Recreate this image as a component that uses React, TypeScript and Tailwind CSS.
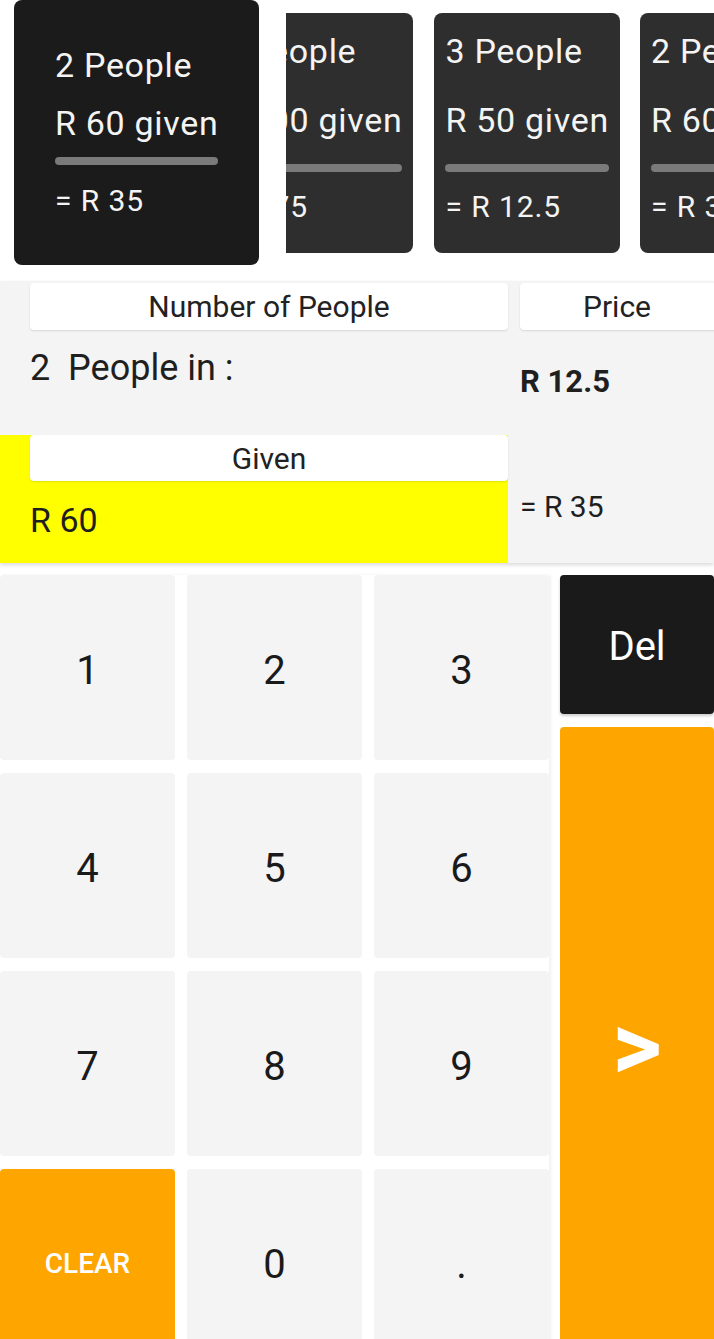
import React from "react";

function SmallCard({ people, given, change }: { people: string; given: string; change: string }) {
  return (
    <div className="shrink-0 w-max h-[240px] rounded-[8px] bg-[#2e2e2e] px-[11px] pt-[17px] text-[#f4f4f4]">
      <div className="text-[34px] leading-[42px] tracking-[0.7px] whitespace-nowrap">{people} People</div>
      <div className="mt-[27px] text-[34px] leading-[42px] tracking-[0.7px] whitespace-nowrap">R {given} given</div>
      <div className="mt-[23px] h-[8px] rounded-full bg-[#7a7a7a]" />
      <div className="mt-[16px] text-[30px] leading-[38px] tracking-[0.9px] whitespace-nowrap">= R {change}</div>
    </div>
  );
}

function Key({ label }: { label: string }) {
  return (
    <div className="bg-[#f4f4f4] rounded-[4px] flex items-center justify-center pt-[6px] text-[40px] text-[#1a1a1a]">
      {label}
    </div>
  );
}

export default function App() {
  return (
    <div className="w-[714px] h-[1339px] overflow-hidden bg-white font-['Roboto',sans-serif]">
      {/* history cards */}
      <div className="flex items-center h-[265px] pl-[14px] overflow-hidden">
        <div className="shrink-0 w-max h-[265px] rounded-[8px] bg-[#1b1b1b] px-[41px] pt-[44px] text-[#f4f4f4]">
          <div className="text-[34px] leading-[42px] tracking-[0.7px] whitespace-nowrap">2 People</div>
          <div className="mt-[16px] text-[34px] leading-[42px] tracking-[0.7px] whitespace-nowrap">R 60 given</div>
          <div className="mt-[13px] h-[8px] rounded-full bg-[#7a7a7a]" />
          <div className="mt-[17px] text-[30px] leading-[38px] tracking-[0.9px] whitespace-nowrap">= R 35</div>
        </div>
        <div className="shrink-0 ml-[27px] w-[127px] overflow-hidden flex justify-end">
          <SmallCard people="2" given="100" change="75" />
        </div>
        <div className="ml-[21px]">
          <SmallCard people="3" given="50" change="12.5" />
        </div>
        <div className="ml-[20px]">
          <SmallCard people="2" given="60" change="35" />
        </div>
      </div>

      {/* calculation panel */}
      <div className="mt-[16px] bg-[#f4f4f4] shadow-[0_2px_4px_rgba(0,0,0,0.15)] flex text-[#1f1f1f]">
        <div className="w-[508px] shrink-0">
          <div className="h-[154px] pl-[30px] pt-[2px]">
            <div className="h-[47px] bg-white rounded-[4px] shadow-[0_1px_2px_rgba(0,0,0,0.12)] flex items-center justify-center text-[30px] text-[#222]">
              Number of People
            </div>
            <div className="mt-[16px] text-[36px] leading-[44px] whitespace-pre">2  People in :</div>
          </div>
          <div className="h-[128px] bg-[#ffff00] pl-[30px]">
            <div className="h-[46px] bg-white rounded-[4px] shadow-[0_1px_2px_rgba(0,0,0,0.12)] flex items-center justify-center text-[30px] text-[#222]">
              Given
            </div>
            <div className="mt-[19px] text-[34px] leading-[40px]">R 60</div>
          </div>
        </div>
        <div className="flex-1 pl-[12px] pt-[2px]">
          <div className="w-[220px] h-[47px] bg-white rounded-[4px] shadow-[0_1px_2px_rgba(0,0,0,0.12)] flex items-center justify-center pr-[26px] text-[30px] text-[#222]">
            Price
          </div>
          <div className="mt-[32px] text-[31px] leading-[40px] font-bold">R 12.5</div>
          <div className="mt-[87px] text-[30px] leading-[36px]">= R 35</div>
        </div>
      </div>

      {/* keypad */}
      <div className="mt-[12px] flex">
        <div className="grid grid-cols-[175px_175px_175px] auto-rows-[185px] gap-x-[12px] gap-y-[13px] shadow-[2px_0_3px_rgba(0,0,0,0.06)]">
          <Key label="1" />
          <Key label="2" />
          <Key label="3" />
          <Key label="4" />
          <Key label="5" />
          <Key label="6" />
          <Key label="7" />
          <Key label="8" />
          <Key label="9" />
          <div className="bg-[#ffa500] rounded-[4px] flex items-center justify-center pt-[4px] text-[28px] font-medium text-white">
            CLEAR
          </div>
          <Key label="0" />
          <Key label="." />
        </div>
        <div className="ml-[11px] w-[154px] flex flex-col">
          <div className="h-[139px] bg-[#1a1a1a] rounded-[4px] flex items-center justify-center pt-[4px] text-[40px] text-white shadow-[0_2px_3px_rgba(0,0,0,0.2)]">
            Del
          </div>
          <div className="mt-[13px] h-[627px] bg-[#ffa500] rounded-[4px] flex items-center justify-center pt-[10px] text-[96px] font-bold text-white">
            &gt;
          </div>
        </div>
      </div>
    </div>
  );
}
